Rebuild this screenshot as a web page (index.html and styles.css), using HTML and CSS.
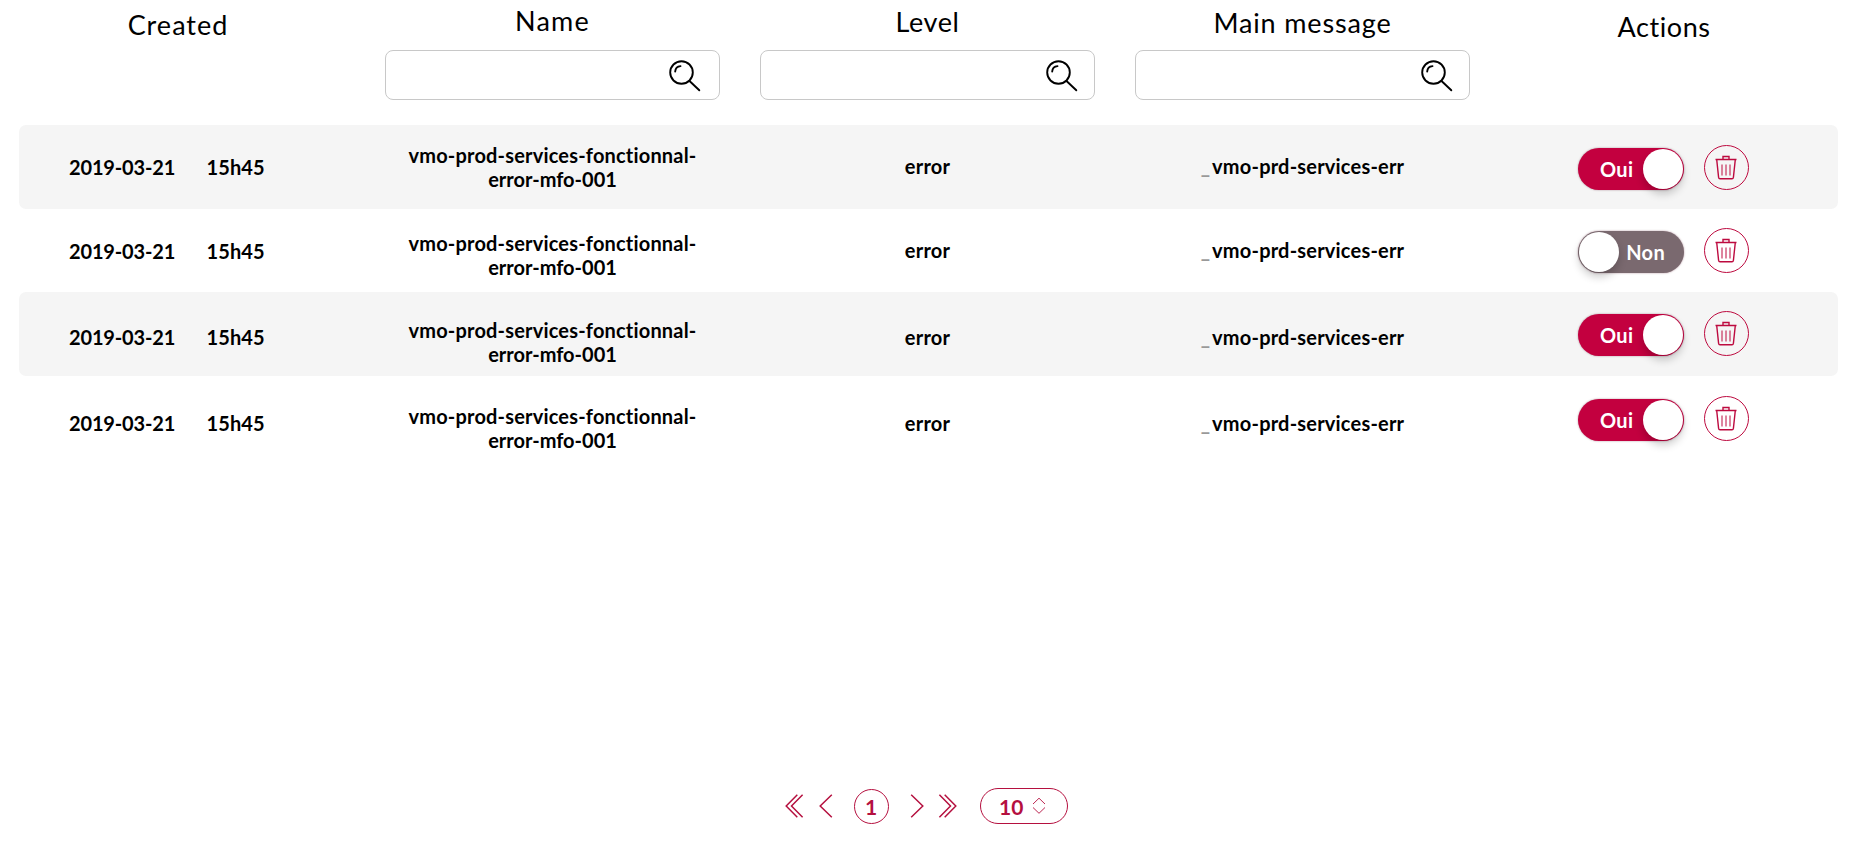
FILE: index.html
```
<!DOCTYPE html>
<html lang="en">
<head>
<meta charset="utf-8">
<title>Logs</title>
<link rel="stylesheet" href="styles.css">
</head>
<body>
<svg class="sprite" aria-hidden="true">
  <symbol id="search" viewBox="0 0 32 32">
    <circle cx="12.5" cy="12.5" r="11.3"/><path d="M20.5 21 30.3 30.3M6.2 11.5C6.4 8.4 8.3 6.4 11.5 6.1"/>
  </symbol>
  <symbol id="trash" viewBox="0 0 24 26">
    <path d="M1.5 4.5H22.5M9 4.5V1.5H15V4.5M2.7 4.5 4.6 22.4Q4.8 23.7 6 23.7H18Q19.2 23.7 19.4 22.4L21.3 4.5"/>
    <path class="bars" d="M8 9.5V20.5M12 9.5V20.5M16 9.5V20.5"/>
  </symbol>
</svg>
<main class="page">
  <header class="row head">
    <div class="col created"><h2>Created</h2></div>
    <div class="col name"><h2>Name</h2><label class="search"><input type="text" aria-label="Name"><svg><use href="#search"/></svg></label></div>
    <div class="col level"><h2>Level</h2><label class="search"><input type="text" aria-label="Level"><svg><use href="#search"/></svg></label></div>
    <div class="col main"><h2>Main message</h2><label class="search"><input type="text" aria-label="Main message"><svg><use href="#search"/></svg></label></div>
    <div class="col actions"><h2>Actions</h2></div>
  </header>
  <section class="rows">
    <article class="row item r1">
      <div class="created"><span class="date">2019-03-21</span><span class="time">15h45</span></div>
      <div class="name"><span class="l1">vmo-prod-services-fonctionnal-</span><br><span class="l2">error-mfo-001</span></div>
      <div class="level">error</div>
      <div class="message"><i>_</i>vmo-prd-services-err</div>
      <div class="actions"><button class="toggle on"><span>Oui</span><b></b></button><button class="trash"><svg><use href="#trash"/></svg></button></div>
    </article>
    <article class="row item r2">
      <div class="created"><span class="date">2019-03-21</span><span class="time">15h45</span></div>
      <div class="name"><span class="l1">vmo-prod-services-fonctionnal-</span><br><span class="l2">error-mfo-001</span></div>
      <div class="level">error</div>
      <div class="message"><i>_</i>vmo-prd-services-err</div>
      <div class="actions"><button class="toggle off"><b></b><span>Non</span></button><button class="trash"><svg><use href="#trash"/></svg></button></div>
    </article>
    <article class="row item r3">
      <div class="created"><span class="date">2019-03-21</span><span class="time">15h45</span></div>
      <div class="name"><span class="l1">vmo-prod-services-fonctionnal-</span><br><span class="l2">error-mfo-001</span></div>
      <div class="level">error</div>
      <div class="message"><i>_</i>vmo-prd-services-err</div>
      <div class="actions"><button class="toggle on"><span>Oui</span><b></b></button><button class="trash"><svg><use href="#trash"/></svg></button></div>
    </article>
    <article class="row item r4">
      <div class="created"><span class="date">2019-03-21</span><span class="time">15h45</span></div>
      <div class="name"><span class="l1">vmo-prod-services-fonctionnal-</span><br><span class="l2">error-mfo-001</span></div>
      <div class="level">error</div>
      <div class="message"><i>_</i>vmo-prd-services-err</div>
      <div class="actions"><button class="toggle on"><span>Oui</span><b></b></button><button class="trash"><svg><use href="#trash"/></svg></button></div>
    </article>
  </section>
  <nav class="pager">
    <svg class="double" viewBox="0 0 19 24"><path d="M12.3.8 1.2 12l11.1 11.2M17.6.8 6.5 12l11.1 11.2"/></svg>
    <svg class="single prev" viewBox="0 0 14 24"><path d="M12.8.8 1.2 12l11.6 11.2"/></svg>
    <span class="current">1</span>
    <svg class="single next" viewBox="0 0 14 24"><path d="M1.2.8 12.8 12 1.2 23.2"/></svg>
    <svg class="double last" viewBox="0 0 19 24"><path d="M6.7.8 17.8 12 6.7 23.2M1.4.8 12.5 12 1.4 23.2"/></svg>
    <span class="size"><span>10</span><svg viewBox="0 0 14 18"><path d="M1 7 7 1.2 13 7M1 10.5 7 16.3 13 10.5"/></svg></span>
  </nav>
</main>
</body>
</html>
```
FILE: styles.css
```
* { box-sizing: border-box; }
body { margin: 0; background: #fff; color: #000; font-family: Lato, "Open Sans", sans-serif; font-variant-ligatures: none; }
.sprite { display: none; }
.page { height: 844px; padding: 0 12px 20px 19px; display: flex; flex-direction: column; overflow: hidden; }
.row { display: grid; grid-template-columns: 346px 375px 375px 375px 348px; }
.head { height: 125px; }
.col { display: flex; flex-direction: column; align-items: center; }
h2 { margin: 0; height: 50px; padding-top: var(--top); font-size: 27px; line-height: 32px; font-weight: 400; letter-spacing: .85px; white-space: nowrap; }
.col.created { --top: 9px; padding-right: 28px; }
.col.created h2 { letter-spacing: 1px; }
.col.name { --top: 5px; }
.col.name h2 { letter-spacing: 1.2px; }
.col.level { --top: 6px; }
.col.level h2, .col.actions h2 { letter-spacing: .6px; }
.col.main { --top: 7px; }
.col.actions { --top: 11px; }
.search { display: flex; align-items: center; width: 335px; height: 50px; padding: 1px 16px 0 12px; border: 1px solid #c8c8c8; border-radius: 8px; }
.col.name .search { padding-right: 18px; }
.search input { flex: 1; min-width: 0; border: 0; outline: 0; background: none; font: inherit; }
.search svg { width: 32px; height: 32px; fill: none; stroke: #000; stroke-width: 1.9; stroke-linecap: round; }

.item { height: 84px; border-radius: 7px; font-size: 20px; line-height: 24px; font-weight: 700; text-align: center; white-space: nowrap; }
.r2 { height: 83px; }
.r1, .r3 { background: #f5f5f5; }
.item .created { display: flex; padding: var(--date) 0 0 50px; text-align: left; letter-spacing: -.15px; }
.date { width: 137.5px; }
.time { letter-spacing: .1px; }
.item .name { padding-top: var(--name); }
.l1 { letter-spacing: .18px; }
.item .level, .message { padding-top: var(--msg); }
.item .level { letter-spacing: .2px; }
.message { letter-spacing: .2px; }
.message i { font-style: normal; color: #999; letter-spacing: 2px; }
.r1 { --date: 30px; --name: 18px; --msg: 29px; --toggle: 22.5px; --trash: 20px; }
.r2 { --date: 30px; --name: 22px; --msg: 29px; --toggle: 22px; --trash: 19px; }
.r3 { --date: 33px; --name: 26px; --msg: 33px; --toggle: 21.5px; --trash: 19px; }
.r4 { --date: 35px; --name: 28px; --msg: 35px; --toggle: 22.5px; --trash: 20px; }

.item .actions { display: flex; align-items: flex-start; gap: 20px; padding-left: 88px; }
button { font: inherit; padding: 0; border: 0; }
.toggle { display: flex; align-items: center; justify-content: space-between; width: 106px; height: 42px; margin-top: var(--toggle); padding: 1px; border-radius: 21px; color: #fff; box-shadow: 0 0 2px rgba(80, 0, 30, .45); }
.toggle b { width: 40px; height: 40px; border-radius: 50%; background: #fff; box-shadow: 0 5px 8px rgba(0, 0, 0, .2); }
.toggle span { letter-spacing: .3px; }
.on { background: #c3003f; padding-left: 22px; }
.off { background: #7a696f; padding-right: 19px; }
.trash { display: flex; align-items: center; justify-content: center; width: 45px; height: 45px; margin-top: var(--trash); padding-right: 1px; border: 1.2px solid #bd0a3f; border-radius: 50%; background: none; }
.trash svg { width: 24px; height: 26px; fill: none; stroke: #bd0a3f; stroke-width: 1.4; }
.bars { stroke-width: 1; }

.pager { display: flex; align-items: center; width: 284px; height: 36px; margin: auto 0 0 766px; color: #b5103f; font-size: 21px; font-weight: 700; }
.pager svg { flex: none; fill: none; stroke: #b5103f; stroke-width: 1.5; }
.double { width: 19px; height: 24px; }
.single { width: 14px; height: 24px; }
.prev { margin-left: 14.5px; }
.current { display: flex; flex: none; align-items: center; justify-content: center; width: 35px; height: 35px; margin: 0 21px 0 21px; border: 1.2px solid #b5103f; border-radius: 50%; }
.last { margin-left: 14.5px; }
.size { display: flex; flex: none; align-items: center; gap: 9px; width: 88px; height: 36px; margin-left: 23px; padding-left: 18px; border: 1.2px solid #b5103f; border-radius: 18px; }
.pager .size svg { width: 14px; height: 18px; stroke-width: .9; }
```
